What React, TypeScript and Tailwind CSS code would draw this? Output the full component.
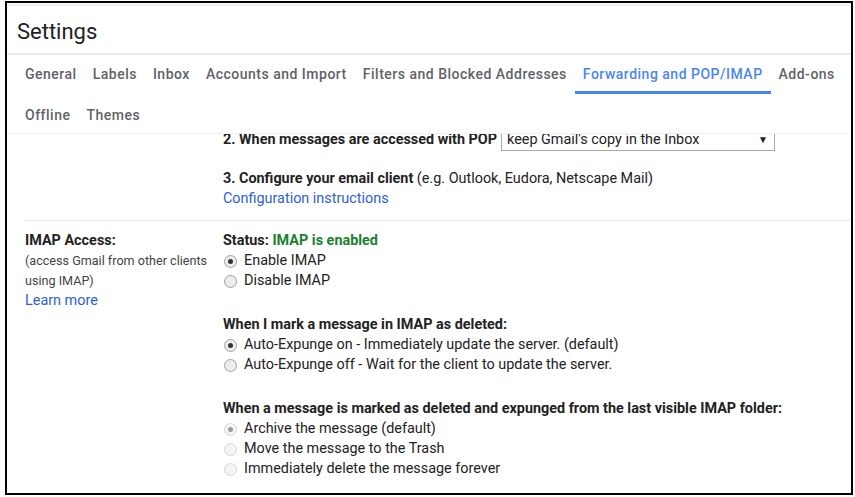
import React from 'react';

const tabsRow1 = [
  'General',
  'Labels',
  'Inbox',
  'Accounts and Import',
  'Filters and Blocked Addresses',
  'Forwarding and POP/IMAP',
  'Add-ons',
];
const tabsRow2 = ['Offline', 'Themes'];

function Radio({ checked, disabled }: { checked?: boolean; disabled?: boolean }) {
  return (
    <span
      className={`inline-flex items-center justify-center w-[13px] h-[13px] rounded-full border ${
        disabled ? 'border-[#d6d6d6] bg-[#f4f4f4]' : 'border-[#a0a0a0] bg-[#ececec]'
      }`}
    >
      {checked && (
        <span className={`w-[5px] h-[5px] rounded-full ${disabled ? 'bg-[#9a9a9a]' : 'bg-[#333]'}`} />
      )}
    </span>
  );
}

function Option({ label, checked, disabled }: { label: string; checked?: boolean; disabled?: boolean }) {
  return (
    <div className="flex items-center h-5">
      <span className="w-[21px] pl-[1px] flex items-center">
        <Radio checked={checked} disabled={disabled} />
      </span>
      <span className="text-[#222]">{label}</span>
    </div>
  );
}

function Tab({ label, active, low }: { label: string; active?: boolean; low?: boolean }) {
  return (
    <div
      className={`px-2 h-[39px] flex items-center whitespace-nowrap border-b-[3px] ${low ? 'pt-[6px]' : 'pt-[2px]'} ${
        active ? 'text-[#4a86f0] border-[#4285f4]' : 'text-[#5f6368] border-transparent'
      }`}
    >
      {label}
    </div>
  );
}

export default function App() {
  return (
    <div className="w-[855px] h-[497px] bg-white pl-[5px] pt-[1px] overflow-hidden" style={{ fontFamily: 'Roboto, "Liberation Sans", sans-serif' }}>
      <div className="w-[848px] h-[494px] border-2 border-black flex flex-col overflow-hidden">
        {/* Header */}
        <div className="h-[3px] border-b-2 border-[#efefef] shrink-0" />
        <div className="h-[49px] flex items-center pl-[10px] border-b-2 border-[#ebebeb] shrink-0">
          <h1 className="text-[22px] text-[#202124] leading-none pt-[4px]">Settings</h1>
        </div>

        {/* Tabs */}
        <div className="pl-[10px] text-[14px] font-medium tracking-[0.5px] shrink-0">
          <div className="flex">
            {tabsRow1.map((t) => (
              <Tab key={t} label={t} active={t === 'Forwarding and POP/IMAP'} />
            ))}
          </div>
          <div className="flex">
            {tabsRow2.map((t) => (
              <Tab key={t} label={t} low />
            ))}
          </div>
        </div>

        {/* Content */}
        <div className="flex-1 overflow-hidden border-t border-[#f1f1f1] text-[14.4px] text-[#222] leading-5">
          <div className="-mt-[6px]">
            <div className="flex">
              <div className="w-[216px] shrink-0" />
              <div className="flex-1">
                <div className="flex items-center h-[23px]">
                  <span className="font-bold">2. When messages are accessed with POP</span>
                  <div className="ml-[4px] w-[274px] h-[22px] border border-[#a9a9a9] flex items-center justify-between pl-[5px] pr-[6px]">
                    <span>keep Gmail's copy in the Inbox</span>
                    <span className="text-[10px] leading-none">▼</span>
                  </div>
                </div>
                <div className="h-[18px]" />
                <div>
                  <span className="font-bold">3. Configure your email client</span> (e.g. Outlook, Eudora, Netscape Mail)
                </div>
                <div className="text-[#2f5fd6]">Configuration instructions</div>
                <div className="h-[11px]" />
              </div>
            </div>

            <div className="ml-[18px] border-t border-[#e5e5e5]" />

            <div className="flex pt-[10px]">
              <div className="w-[216px] shrink-0 pl-[18px]">
                <div className="font-bold text-[#222]">IMAP Access:</div>
                <div className="text-[12.6px] text-[#444]">(access Gmail from other clients</div>
                <div className="text-[12.6px] text-[#444]">using IMAP)</div>
                <div className="text-[#2f5fd6]">Learn more</div>
              </div>
              <div className="flex-1">
                <div className="font-bold">
                  Status: <span className="text-[#1a7f2e]">IMAP is enabled</span>
                </div>
                <Option label="Enable IMAP" checked />
                <Option label="Disable IMAP" />

                <div className="mt-[24px] font-bold">When I mark a message in IMAP as deleted:</div>
                <Option label="Auto-Expunge on - Immediately update the server. (default)" checked />
                <Option label="Auto-Expunge off - Wait for the client to update the server." />

                <div className="mt-[24px] font-bold">
                  When a message is marked as deleted and expunged from the last visible IMAP folder:
                </div>
                <Option label="Archive the message (default)" checked disabled />
                <Option label="Move the message to the Trash" disabled />
                <Option label="Immediately delete the message forever" disabled />
              </div>
            </div>
          </div>
        </div>
      </div>
    </div>
  );
}
